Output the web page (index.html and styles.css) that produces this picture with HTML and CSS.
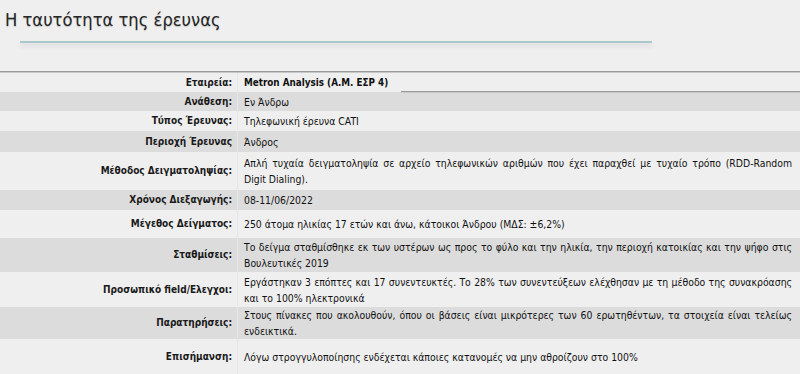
FILE: index.html
```html
<!DOCTYPE html>
<html lang="el">
<head>
<meta charset="utf-8">
<link rel="stylesheet" href="styles.css">
</head>
<body>
<div class="page">
  <h2 class="title">Η ταυτότητα της έρευνας</h2>
  <div class="title-rule"></div>
  <hr class="sep">
  <table class="info">
    <tr class="r1"><th>Εταιρεία:</th><td><b>Metron Analysis (Α.Μ. ΕΣΡ 4)</b></td></tr>
    <tr class="r2 alt"><th>Ανάθεση:</th><td class="ruled">Εν Άνδρω</td></tr>
    <tr class="r3"><th>Τύπος Έρευνας:</th><td>Τηλεφωνική έρευνα CATI</td></tr>
    <tr class="r4 alt"><th>Περιοχή Έρευνας</th><td>Άνδρος</td></tr>
    <tr class="r5"><th>Μέθοδος Δειγματοληψίας:</th><td>Απλή τυχαία δειγματοληψία σε αρχείο τηλεφωνικών αριθμών που έχει παραχθεί με τυχαίο τρόπο (RDD-Random Digit Dialing).</td></tr>
    <tr class="r6 alt"><th>Χρόνος Διεξαγωγής:</th><td>08-11/06/2022</td></tr>
    <tr class="r7"><th>Μέγεθος Δείγματος:</th><td>250 άτομα ηλικίας 17 ετών και άνω, κάτοικοι Άνδρου (ΜΔΣ: ±6,2%)</td></tr>
    <tr class="r8 alt"><th>Σταθμίσεις:</th><td>Το δείγμα σταθμίσθηκε εκ των υστέρων ως προς το φύλο και την ηλικία, την περιοχή κατοικίας και την ψήφο στις Βουλευτικές 2019</td></tr>
    <tr class="r9"><th>Προσωπικό field/Ελεγχοι:</th><td>Εργάστηκαν 3 επόπτες και 17 συνεντευκτές. Το 28% των συνεντεύξεων ελέχθησαν με τη μέθοδο της συνακρόασης και το 100% ηλεκτρονικά</td></tr>
    <tr class="r10 alt"><th>Παρατηρήσεις:</th><td>Στους πίνακες που ακολουθούν, όπου οι βάσεις είναι μικρότερες των 60 ερωτηθέντων, τα στοιχεία είναι τελείως ενδεικτικά.</td></tr>
    <tr class="r11"><th>Επισήμανση:</th><td>Λόγω στρογγυλοποίησης ενδέχεται κάποιες κατανομές να μην αθροίζουν στο 100%</td></tr>
  </table>
</div>
</body>
</html>
```
FILE: styles.css
```css
html, body {
  margin: 0;
  padding: 0;
  background: #efefef;
}
body {
  font-family: "DejaVu Sans Condensed", "DejaVu Sans", sans-serif;
  color: #111;
  font-size: 10.35px;
}
.page {
  width: 800px;
}
.title {
  margin: 0;
  padding: 9px 0 0 5px;
  height: 22px;
  font-family: "DejaVu Sans Condensed", "DejaVu Sans", sans-serif;
  font-weight: normal;
  font-size: 18.2px;
  line-height: 22px;
  color: #262626;
  text-shadow: 0 1px 1px rgba(0, 0, 0, 0.18);
}
.title-rule {
  margin: 10px 0 0 20px;
  width: 632px;
  height: 2px;
  background: #a9c8cc;
  box-shadow: 0 3px 4px rgba(0, 0, 0, 0.12);
}
.sep {
  margin: 28px 0 0 0;
  border: 0;
  border-top: 1px solid #9a9a9a;
  border-bottom: 1px solid #c8c8c8;
  height: 0;
}
.info {
  width: 800px;
  border-collapse: collapse;
  background: #efefef;
}
.info th, .info td {
  padding: 0;
  vertical-align: middle;
  line-height: 16px;
}
.info th {
  width: 232px;
  padding-right: 5px;
  text-align: right;
  font-weight: bold;
  font-size: 10px;
  color: #1a1a1a;
  border-right: 1px solid #e6e6e6;
}
.info td {
  padding-left: 6px;
  padding-right: 8px;
  text-align: justify;
}
.info td b {
  font-size: 9.8px;
}
.info .ruled {
  position: relative;
}
.info .ruled::before {
  content: "";
  position: absolute;
  top: -1px;
  left: 163px;
  right: 0;
  border-top: 1px solid #9a9a9a;
  border-bottom: 1px solid #c8c8c8;
}
.info .alt {
  background: #dcdcdc;
}
.r1 { height: 19px; }
.r2 { height: 19px; }
.r3 { height: 20px; }
.r4 { height: 21px; }
.r5 { height: 38px; }
.r6 { height: 20px; }
.r7 { height: 28px; }
.r8 { height: 34px; }
.r9 { height: 35px; }
.r10 { height: 31px; }
.r11 { height: 36px; }
```
